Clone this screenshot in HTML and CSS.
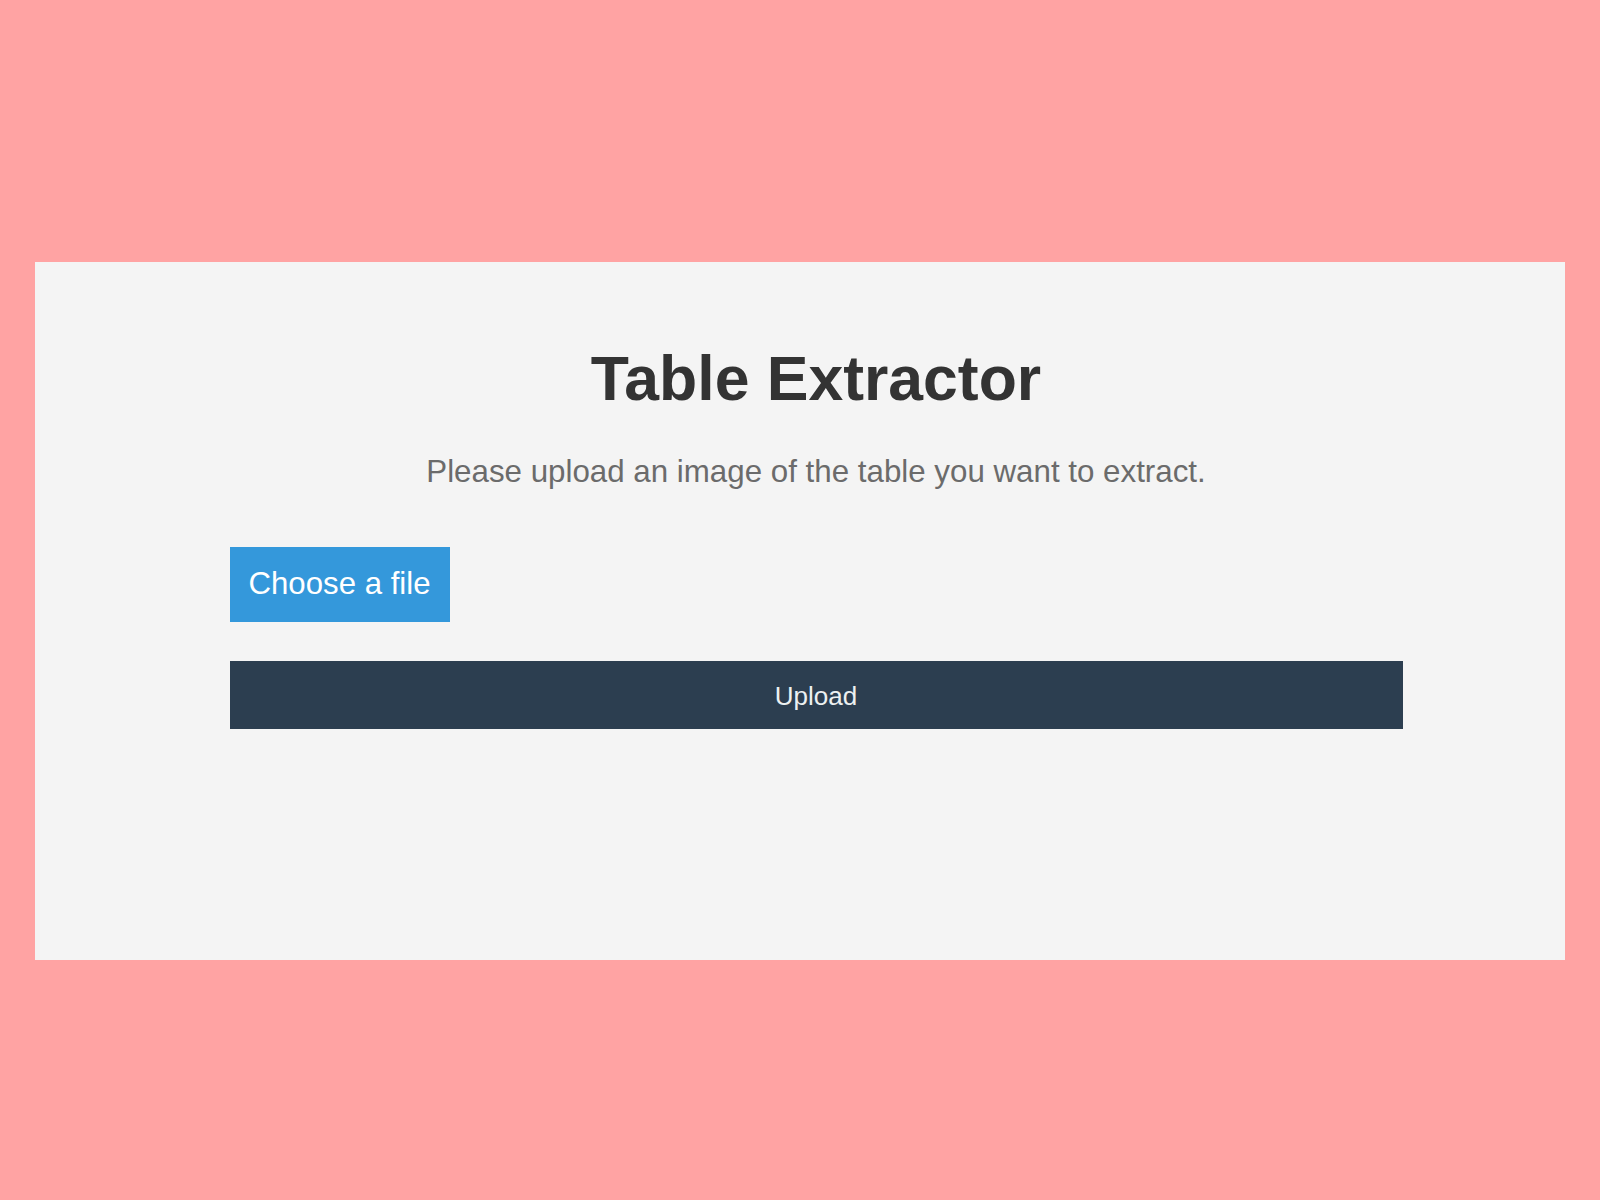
FILE: index.html
```html
<!DOCTYPE html>
<html lang="en">
<head>
<meta charset="utf-8">
<title>Table Extractor</title>
<link rel="stylesheet" href="styles.css">
</head>
<body>
<main class="card">
  <div class="content">
    <h1 class="title">Table Extractor</h1>
    <p class="subtitle">Please upload an image of the table you want to extract.</p>
    <form class="form">
      <div class="file-row">
        <label class="choose">Choose a file<input class="file-input" type="file"></label>
      </div>
      <button type="button" class="upload">Upload</button>
    </form>
  </div>
</main>
</body>
</html>
```

FILE: styles.css
```css
html, body {
  margin: 0;
  padding: 0;
}
body {
  background: #ffa3a3;
  font-family: "Liberation Sans", Arial, sans-serif;
  height: 1200px;
  padding-top: 262px;
  box-sizing: border-box;
}
.card {
  display: block;
  box-sizing: border-box;
  margin-left: 35px;
  width: 1530px;
  height: 698px;
  background: #f4f4f4;
  padding: 80px 0 0 32px;
}
.content {
  width: 1173px;
  margin: 0 auto;
}
.title {
  margin: 0;
  font-size: 62.5px;
  line-height: 72px;
  font-weight: bold;
  color: #333333;
  text-align: center;
}
.subtitle {
  margin: 40px 0 0;
  font-size: 31.3px;
  line-height: 36px;
  color: #6b6b6b;
  text-align: center;
}
.form {
  margin-top: 57px;
}
.file-row {
  display: flex;
}
.choose {
  display: block;
  background: #3498db;
  color: #ffffff;
  font-size: 31.2px;
  line-height: 35px;
  padding: 19px 19px 21px;
  cursor: pointer;
}
.file-input {
  display: none;
}
.upload {
  display: block;
  width: 100%;
  margin-top: 39px;
  border: none;
  background: #2c3e50;
  color: #ecf0f1;
  font-family: "Liberation Sans", Arial, sans-serif;
  font-size: 26px;
  line-height: 28px;
  padding: 21px 0 19px;
  cursor: pointer;
}
```
